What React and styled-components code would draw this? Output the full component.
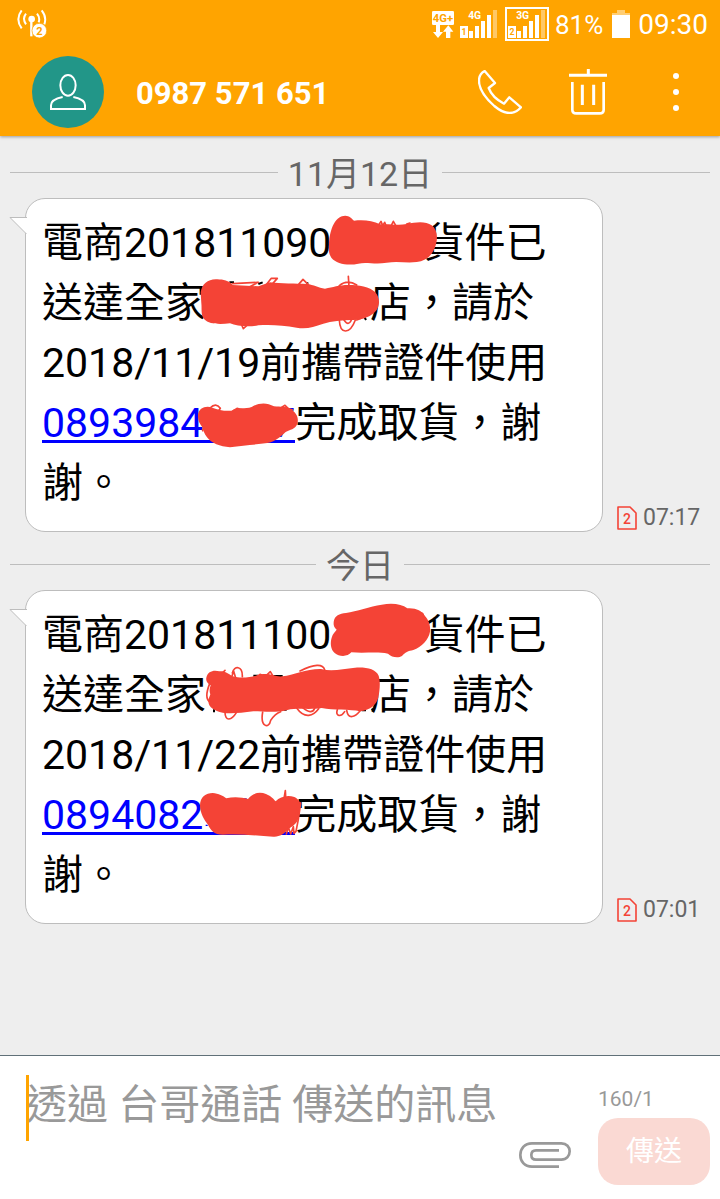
import React, { useState } from 'react'
import styled, { createGlobalStyle } from 'styled-components'

const GlobalStyle = createGlobalStyle`
  * {
    box-sizing: border-box;
  }
  body {
    margin: 0;
    background: #eee;
    font-family: Roboto, "Noto Sans CJK TC", sans-serif;
  }
  button {
    padding: 0;
    border: 0;
    background: none;
    font-family: inherit;
    cursor: pointer;
  }
  svg {
    display: block;
  }
`

const Page = styled.div`
  display: flex;
  flex-direction: column;
  min-height: 100vh;
`

const TopBar = styled.header`
  position: relative;
  background: #ffa400;
  color: #fff;
  box-shadow: 0 1px 3px rgba(0, 0, 0, 0.35);
`

const StatusBar = styled.div`
  display: flex;
  align-items: center;
  height: 48px;
  padding: 0 12px 0 17px;
`

const StatusIcons = styled.div`
  display: flex;
  align-items: center;
  margin-left: auto;
  gap: 6px;
`

const StatusText = styled.span`
  font-size: ${props => props.$size}px;
  line-height: 48px;
  padding-top: 2px;
`

const Toolbar = styled.div`
  display: flex;
  align-items: center;
  height: 88px;
  padding-left: 32px;
`

const Avatar = styled.div`
  display: flex;
  align-items: center;
  justify-content: center;
  width: 72px;
  height: 72px;
  border-radius: 50%;
  background: #229688;
`

const Contact = styled.h1`
  flex: 1;
  margin: 0 0 0 32px;
  padding-top: 4px;
  font-size: 31px;
  line-height: 40px;
  font-weight: bold;
`

const IconButton = styled.button`
  display: flex;
  align-items: center;
  justify-content: center;
  width: 88px;
  height: 88px;
`

const Thread = styled.main`
  flex: 1;
  display: flex;
  flex-direction: column;
  padding-top: 10px;
`

const DateLine = styled.h2`
  display: flex;
  align-items: center;
  gap: 10px;
  height: 52px;
  margin: 0 10px;
  color: #666;
  font-size: 34px;
  line-height: 52px;
  font-weight: normal;
  &:before, &:after {
    content: '';
    flex: 1;
    height: 1px;
    background: #bdbdbd;
  }
`

const DateText = styled.span`
  padding-top: 4px;
`

const MessageRow = styled.article`
  display: flex;
  align-items: flex-end;
  padding-left: 25px;
  & + h2 {
    margin-top: 6px;
  }
`

const Bubble = styled.div`
  position: relative;
  flex: 1;
  padding: 14px 16px 18px;
  border: 1px solid #bdbdbd;
  border-radius: 20px;
  background: #fff;
`

const BubbleText = styled.p`
  margin: 0;
  color: #000;
  font-size: 41px;
  line-height: 60px;
`

const Tail = styled.svg`
  position: absolute;
  left: -17px;
  top: 18px;
`

const PhoneLink = styled.a`
  color: #00f;
  text-decoration: none;
  background: linear-gradient(#00f, #00f) no-repeat 0 calc(100% - 4px) / 100% 3px;
`

const Redacted = styled.span`
  position: relative;
  display: inline-block;
  width: ${props => props.$width}px;
  height: 60px;
  vertical-align: top;
  text-align: right;
`

const Scribble = styled.svg`
  position: absolute;
  left: 0;
  top: 2px;
  overflow: visible;
`

const Meta = styled.div`
  display: flex;
  align-items: center;
  gap: 6px;
  width: 117px;
  height: 28px;
  padding-left: 14px;
  color: #666;
  font-size: 23px;
  line-height: 28px;
`

const Compose = styled.form`
  display: flex;
  min-height: 144px;
  padding: 19px 10px 14px 26px;
  border-top: 1px solid #607078;
  background: #fff;
`

const MessageInput = styled.textarea`
  flex: 1;
  min-width: 0;
  height: 66px;
  padding: 0;
  border: 0;
  border-left: 3px solid #ffa400;
  border-radius: 0;
  outline: 0;
  resize: none;
  overflow: hidden;
  background: none;
  color: #000;
  font-family: inherit;
  font-size: 41px;
  line-height: 60px;
  text-indent: -3px;
  &::placeholder {
    color: #999;
    opacity: 1;
  }
`

const AttachButton = styled.button`
  align-self: flex-end;
  width: 52px;
  height: 60px;
  margin-right: 27px;
`

const SendColumn = styled.div`
  display: flex;
  flex-direction: column;
  justify-content: space-between;
  width: 112px;
`

const Counter = styled.span`
  padding-top: 8px;
  color: #999;
  font-size: 21px;
  line-height: 32px;
`

const SendButton = styled.button`
  height: 67px;
  border-radius: 20px;
  background: #fad9d3;
  color: #fff;
  font-size: 28px;
  line-height: 40px;
`

const AntennaIcon = () => (
  <svg width="30" height="30" viewBox="52 28 90 90" fill="none" stroke="#fff" strokeWidth="6">
    <path d="M66 32Q46 58 66 86M79 42Q67 57 79 74M126 32Q142 52 134 74M112 42Q122 54 117 68" />
    <path d="M95 60V110" strokeWidth="7" />
    <circle cx="96" cy="58" r="10" fill="#fff" stroke="none" />
    <circle cx="119" cy="93" r="22" fill="#fff" stroke="#ffa400" strokeWidth="2" />
    <text x="119" y="105" textAnchor="middle" fontSize="33" fontWeight="bold" fill="#ffa400" stroke="none">2</text>
  </svg>
)

const DataIcon = () => (
  <svg width="22" height="27" viewBox="36 33 66 81" fill="#fff">
    <rect x="36" y="33" width="66" height="42" rx="4" />
    <text x="69" y="66" textAnchor="middle" fontSize="34" fontWeight="bold" fill="#ffa400">4G+</text>
    <path d="M48 72H60V96H69L54 114L39 96H48ZM78 114H91V95H100L85 76L69 95H78Z" />
  </svg>
)

const Bars = ({ label, slot }) => (
  <svg width="37" height="28" viewBox="120 30 111 84" fill="#fff">
    <path d="M147 93H159V114H147ZM165 78H177V114H165ZM183 63H195V114H183ZM201 45H213V114H201Z" />
    <rect x="219" y="30" width="12" height="84" opacity=".4" />
    <rect x="120" y="78" width="24" height="36" />
    <text x="132" y="106" textAnchor="middle" fontSize="26" fontWeight="bold" fill="#ffa400">{slot}</text>
    <text x="164" y="58" textAnchor="middle" fontSize="31" fontWeight="bold">{label}</text>
  </svg>
)

const ActiveSim = styled.span`
  display: flex;
  align-items: center;
  justify-content: center;
  width: 44px;
  height: 34px;
  margin-left: 2px;
  border: 2px solid #fff;
`

const BatteryIcon = () => (
  <svg width="23" height="28" viewBox="-1 0 19 28" fill="#fff">
    <path d="M5 0H13V3H18V5H0V3H5Z" opacity=".45" />
    <rect y="5" width="18" height="23" />
  </svg>
)

const PersonIcon = () => (
  <svg width="36" height="36" viewBox="150 218 108 108" fill="none" stroke="#fff" strokeWidth="6">
    <ellipse cx="204" cy="252" rx="23" ry="31" />
    <path d="M188 287Q153 294 153 312V323H255V312Q255 294 220 287" />
  </svg>
)

const CallIcon = () => (
  <svg width="44" height="44" viewBox="54 60 132 132" fill="none" stroke="#fff" strokeWidth="7" strokeLinejoin="round">
    <path d="M74 63Q57 72 57 92C57 118 81 148 103 168Q128 189 148 189Q169 189 183 172L148 142L132 161Q97 143 86 114L105 99Z" />
  </svg>
)

const TrashIcon = () => (
  <svg width="38" height="46" viewBox="327 54 114 138" fill="none" stroke="#fff" strokeWidth="9">
    <path d="M385 54V70M327 73H441M367 101V162M401 101V162" />
    <path d="M337 93V176Q337 187 349 187H419Q431 187 431 176V93" strokeWidth="8" />
  </svg>
)

const MoreIcon = () => (
  <svg width="6" height="38" viewBox="0 0 6 38" fill="#fff">
    <circle cx="3" cy="3" r="3" />
    <circle cx="3" cy="19" r="3" />
    <circle cx="3" cy="35" r="3" />
  </svg>
)

const ClipIcon = () => (
  <svg width="52" height="26" viewBox="57 276 156 78" fill="none" stroke="#999" strokeWidth="8">
    <path d="M177 350H96C73 350 61 334 61 315S73 280 96 280H184C200 280 209 291 209 304S200 329 184 329H108C98 329 94 322 94 315S98 301 108 301H177" />
  </svg>
)

const SimIcon = () => (
  <svg width="20" height="24" viewBox="0 0 20 24" fill="none" stroke="#f44336" strokeWidth="1.6" strokeLinejoin="round">
    <path d="M1 1H13L19 7V23H1Z" />
    <text x="10" y="18" textAnchor="middle" fontSize="14" fontWeight="500" fill="#f44336" stroke="none">2</text>
  </svg>
)

// width of the hidden part, then the marker strokes over it
const Marker = ({ width, viewBox, fill, lines, specks, ink = '#000', children }) => (
  <Redacted $width={width}>
    {children}
    <Scribble width={width} height="60" viewBox={viewBox} fill="none" aria-hidden="true">
      {specks && <path d={specks} stroke={ink} strokeWidth="6" />}
      <path d={fill} fill="#f44336" />
      <path d={lines} stroke="#f44336" strokeWidth="5" strokeLinecap="round" strokeLinejoin="round" />
    </Scribble>
  </Redacted>
)

const Message = ({ time, children }) => (
  <MessageRow>
    <Bubble>
      <Tail width="18" height="18" viewBox="0 0 18 18">
        <path d="M1 .5H18V17.5Z" fill="#fff" />
        <path d="M18 .5H1L17.5 17" fill="none" stroke="#bdbdbd" />
      </Tail>
      <BubbleText>{children}</BubbleText>
    </Bubble>
    <Meta>
      <SimIcon />
      <time>{time}</time>
    </Meta>
  </MessageRow>
)

const App = () => {
  const [text, setText] = useState('')

  return (
    <Page lang="zh-Hant">
      <GlobalStyle />
      <TopBar>
        <StatusBar>
          <AntennaIcon />
          <StatusIcons>
            <DataIcon />
            <Bars label="4G" slot="1" />
            <ActiveSim><Bars label="3G" slot="2" /></ActiveSim>
            <StatusText $size={26}>81%</StatusText>
            <BatteryIcon />
            <StatusText $size={28}>09:30</StatusText>
          </StatusIcons>
        </StatusBar>
        <Toolbar>
          <Avatar><PersonIcon /></Avatar>
          <Contact>0987 571 651</Contact>
          <IconButton type="button" aria-label="通話"><CallIcon /></IconButton>
          <IconButton type="button" aria-label="刪除"><TrashIcon /></IconButton>
          <IconButton type="button" aria-label="更多"><MoreIcon /></IconButton>
        </Toolbar>
      </TopBar>
      <Thread>
        <DateLine><DateText>11月12日</DateText></DateLine>
        <Message time="07:17">
          電商201811090
          <Marker
            width={92}
            viewBox="423 30 276 180"
            fill="M417 120C418 85 430 32 466 32C478 32 486 41 492 47C520 43 548 47 570 58C600 56 625 62 650 57C680 50 708 48 725 61C741 73 744 95 738 118C730 150 708 168 680 171C650 175 625 168 590 173C555 179 528 170 505 176C475 182 440 178 424 158C416 146 416 135 417 120Z"
            lines="M566 60L573 49L578 62L584 52L588 62M604 61L610 49L617 61M650 57L660 54"
          />
          貨件已送達全家
          <Marker
            width={164}
            viewBox="48 210 492 180"
            specks="M118 232H132M205 237L218 232M352 232V244M520 330L528 345"
            fill="M32 262C36 236 55 221 82 223C100 224 116 226 128 240L205 244L240 232C270 236 320 236 350 237C372 239 385 249 405 251C430 247 445 240 475 240C505 240 540 245 556 262C570 278 570 300 560 315C545 335 520 344 490 345C455 346 425 348 400 356C370 366 350 373 320 368C280 361 240 358 205 361C175 367 140 363 120 355C90 358 58 359 42 342C32 330 36 310 34 295Z"
            lines="M128 236L205 232L178 246M228 240L244 220H262L246 238M326 238L339 223L354 238M448 242Q472 222 500 240M475 214L477 245M155 360L160 371L170 362M448 345C450 390 480 388 496 345M462 345Q475 365 484 345M500 345L514 340"
          />
          店，請於2018/11/19前攜帶證件使用
          <PhoneLink href="tel:0893984">
            0893984
            <Marker
              width={92}
              viewBox="69 15 276 180"
              fill="M54 75C56 53 78 46 97 53C115 60 135 64 154 62C175 51 195 58 215 51C235 38 260 36 282 49C302 52 318 47 332 58C350 68 357 85 352 101C345 119 330 118 317 126C302 140 285 156 262 159C230 164 190 166 150 172C120 170 94 160 81 142C72 130 70 120 66 110C58 100 53 90 54 75Z"
              lines="M90 54Q108 36 121 55L116 62M160 62L171 55L184 59M302 54L315 46L325 56L338 60M68 118V122"
            >
              7
            </Marker>
          </PhoneLink>
          完成取貨，謝謝。
        </Message>
        <DateLine><DateText>今日</DateText></DateLine>
        <Message time="07:01">
          電商201811100
          <Marker
            width={92}
            viewBox="423 30 276 180"
            fill="M431 75C434 55 448 50 468 48C500 43 540 28 575 23C610 17 635 22 652 34C678 32 695 42 703 55C716 68 722 85 720 104C716 128 695 150 670 159C655 162 645 166 636 177C624 184 605 181 594 170C560 163 525 170 484 166C473 180 448 180 434 168C422 157 420 138 425 122C428 110 436 104 440 98C432 92 430 84 431 75Z"
            lines="M678 52Q700 40 701 60"
          />
          貨件已送達全家
          <Marker
            width={164}
            viewBox="48 210 492 180"
            specks="M190 236H204M250 237H278M72 337V346M282 338H290M545 335L552 343M515 340H528"
            fill="M49 242C53 222 72 218 88 223C105 221 115 230 128 238C160 247 192 238 215 232C243 228 252 240 278 238C310 234 350 215 393 216C425 224 460 216 495 212C530 210 557 216 566 236C572 255 569 280 565 302C558 325 540 339 510 343C480 336 430 340 395 333C365 339 320 332 292 339C260 348 218 343 190 343C150 349 115 350 98 347C72 341 53 330 55 308L61 292C56 278 61 270 62 265C52 260 47 252 49 242Z"
            lines="M97 228L105 220M126 237L131 223L136 239M127 228C133 205 158 205 157 239M196 241L210 232L226 238L241 224L250 239M330 222Q395 190 404 218M59 260C48 288 48 309 61 315M105 345C105 375 125 370 139 347M218 345C210 390 237 397 242 370Q255 350 272 344M320 333C345 368 370 356 386 335M338 332Q365 355 374 334M442 338C435 360 454 360 464 344M470 340C475 369 495 360 510 342"
          />
          店，請於2018/11/22前攜帶證件使用
          <PhoneLink href="tel:0894082">
            0894082
            <Marker
              width={92}
              viewBox="69 21 276 180"
              specks="M190 58H200M80 134V138"
              ink="#00f"
              fill="M60 78C60 50 78 39 98 39C116 40 130 48 139 55C160 49 185 51 204 57C218 38 240 35 258 42C275 49 280 57 287 64C300 51 320 44 343 51C362 60 364 75 358 100C356 125 348 132 325 148C310 163 300 171 280 170C230 167 180 161 130 164C103 165 92 150 84 134C72 119 61 100 60 78Z"
              lines="M313 50L316 32L317 50M348 65L362 69L355 118L348 154L342 160L340 140L332 162L325 142L319 162M352 85L347 120"
            />
          </PhoneLink>
          完成取貨，謝謝。
        </Message>
      </Thread>
      <Compose onSubmit={e => e.preventDefault()}>
        <MessageInput
          aria-label="訊息"
          placeholder="透過 台哥通話 傳送的訊息"
          value={text}
          onChange={e => setText(e.target.value)}
        />
        <AttachButton type="button" aria-label="附加檔案"><ClipIcon /></AttachButton>
        <SendColumn>
          <Counter>160/1</Counter>
          <SendButton type="submit">傳送</SendButton>
        </SendColumn>
      </Compose>
    </Page>
  )
}

export default App
